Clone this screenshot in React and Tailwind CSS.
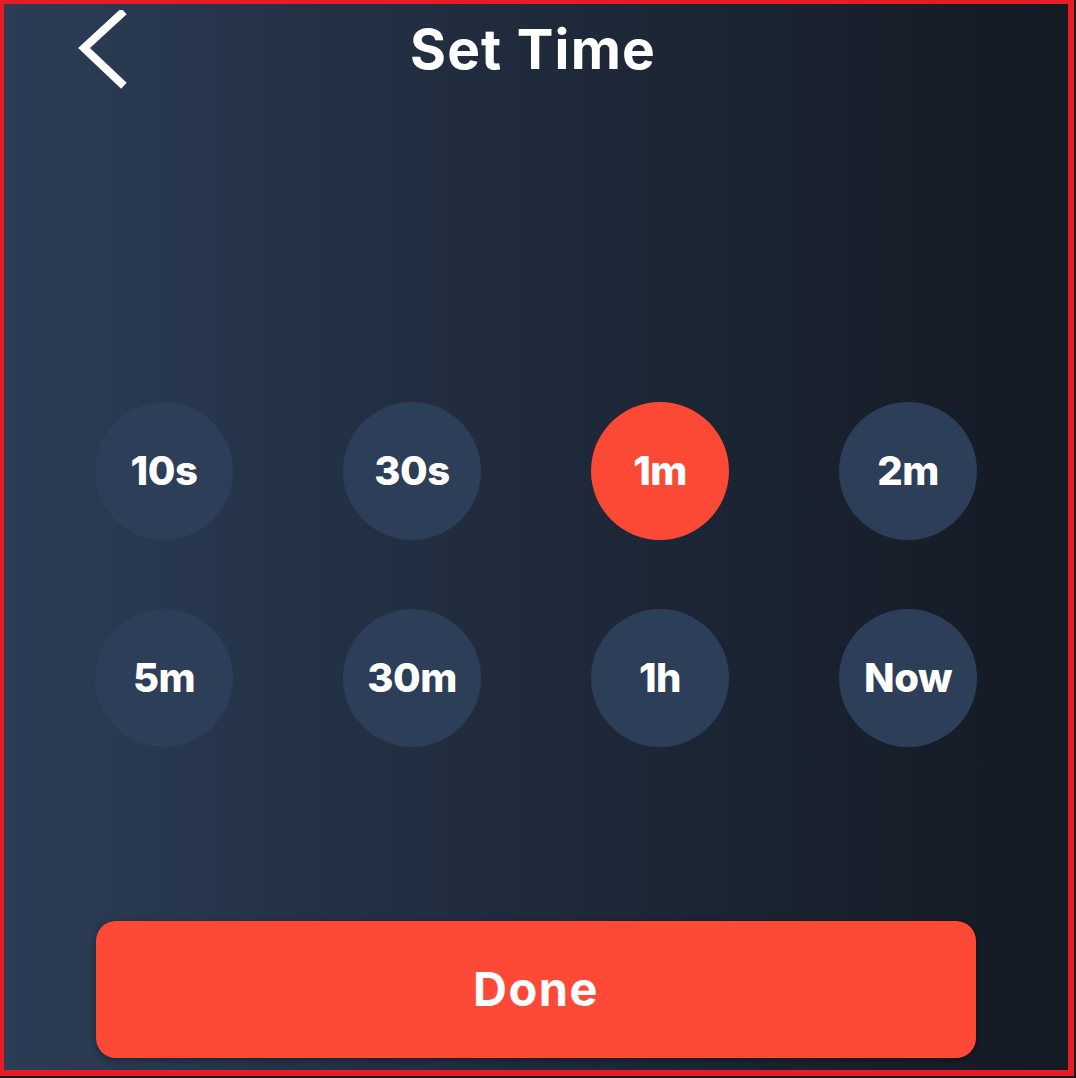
import { useState } from 'react';

const OPTIONS = ['10s', '30s', '1m', '2m', '5m', '30m', '1h', 'Now'];

const BackIcon = () => (
  <svg width="50" height="80" viewBox="0 0 50 80" fill="none">
    <path d="M43 4 L6 38 L43 73" stroke="white" strokeWidth="8" strokeLinecap="square" strokeLinejoin="miter" />
  </svg>
);

const App = () => {
  const [selected, setSelected] = useState('1m');

  return (
    <div className="w-[1076px] h-[1078px] bg-[#141a24] pr-[2px] pb-[2px]" style={{ fontFamily: 'Inter, "Noto Sans", sans-serif' }}>
      <div className="w-full h-full border-t-4 border-l-4 border-r-[6px] border-b-[6px] border-[#e81c25] bg-gradient-to-r from-[#2b3d56] via-[#1f2a3b] to-[#141a24] flex flex-col">
        <div className="grid grid-cols-[1fr_auto_1fr] h-[96px]">
          <div className="pl-[74px] pt-[6px]">
            <button className="block">
              <BackIcon />
            </button>
          </div>
          <h1 className="text-white font-bold text-[55px] leading-none tracking-[1.2px] pt-[18px] -ml-[6px]">Set Time</h1>
          <div />
        </div>

        <div className="grid grid-cols-4 gap-y-[69px] px-[36px] mt-[302px]">
          {OPTIONS.map((opt) => (
            <div key={opt} className="flex justify-center">
              <button
                onClick={() => setSelected(opt)}
                className={`w-[138px] h-[138px] rounded-full flex items-center justify-center text-white font-extrabold text-[40px] tracking-[-0.5px] ${
                  selected === opt ? 'bg-[#fc4936]' : 'bg-[#2c3e58]'
                }`}
              >
                {opt}
              </button>
            </div>
          ))}
        </div>

        <div className="flex-1" />

        <button className="mx-[92px] mb-[12px] h-[137px] rounded-[20px] bg-[#fd4936] text-white font-bold text-[47px] tracking-[1.5px] shadow-[0_2px_6px_rgba(0,0,0,0.35)]">
          Done
        </button>
      </div>
    </div>
  );
};

export default App;
